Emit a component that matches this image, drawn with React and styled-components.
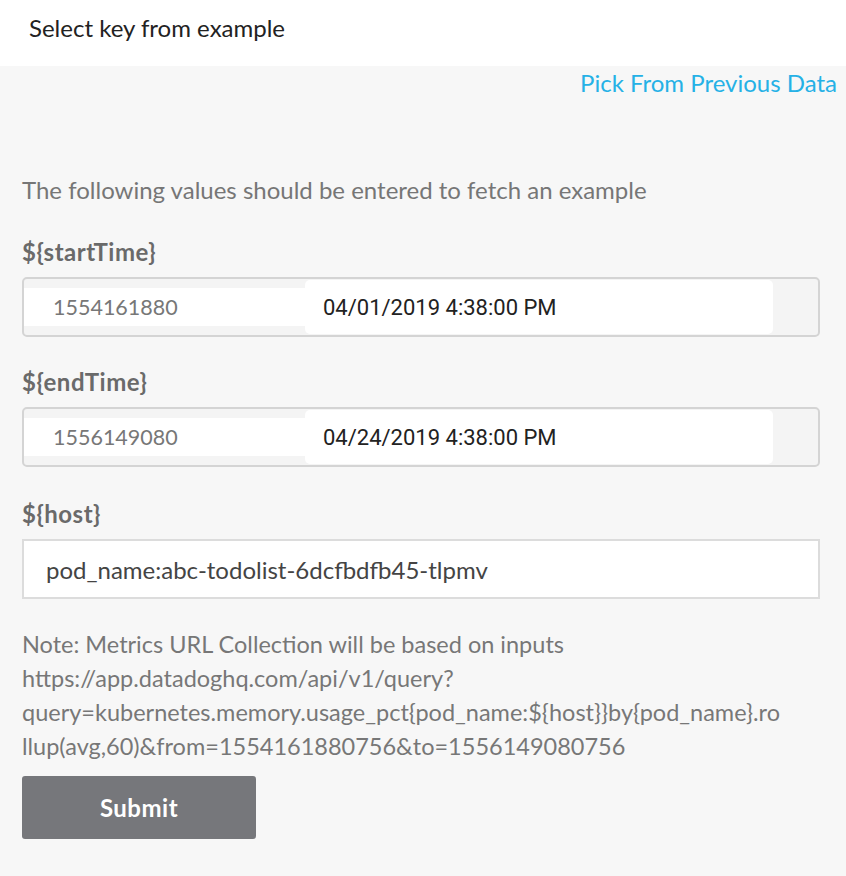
import React from "react";
import styled, { createGlobalStyle } from "styled-components";

const GlobalStyle = createGlobalStyle`
  html, body {
    margin: 0;
    padding: 0;
    background: #f7f7f7;
  }
  body {
    font-family: Lato, "Noto Sans", sans-serif;
  }
  * { box-sizing: border-box; }
`;

const Page = styled.div`
  width: 846px;
  min-height: 876px;
  background: #f7f7f7;
`;

const Header = styled.div`
  height: 66px;
  background: #ffffff;
  display: flex;
  align-items: center;
  padding-left: 29px;
  padding-bottom: 12px;
  font-size: 24px;
  color: #222222;
`;

const Body = styled.div`
  padding: 0 26px 40px 22px;
`;

const LinkRow = styled.div`
  height: 32px;
  display: flex;
  align-items: center;
  justify-content: flex-end;
  margin-right: -17px;
`;

const Link = styled.a`
  font-size: 24px;
  color: #25b1e6;
  text-decoration: none;
  cursor: pointer;
`;

const Intro = styled.p`
  margin: 77px 0 0;
  line-height: 30px;
  font-size: 24px;
  color: #767676;
`;

const Field = styled.div`
  margin-top: ${(p) => p.$top || 30}px;
`;

const Label = styled.div`
  line-height: 30px;
  font-size: 24px;
  font-weight: 700;
  letter-spacing: 0.5px;
  color: #6a6a6a;
  margin-bottom: 10px;
`;

const TimeBox = styled.div`
  height: 60px;
  border: 2px solid #d4d4d4;
  border-radius: 5px;
  background: #f4f4f4;
  display: flex;
  align-items: center;
`;

const Epoch = styled.div`
  width: 281px;
  height: 38px;
  background: #ffffff;
  display: flex;
  align-items: center;
  padding-left: 29px;
  font-size: 21.5px;
  color: #777777;
`;

const DateCell = styled.div`
  width: 468px;
  height: 54px;
  background: #ffffff;
  border-radius: 5px;
  display: flex;
  align-items: center;
  padding-left: 18px;
  font-family: Roboto, "Noto Sans", sans-serif;
  font-size: 22px;
  color: #222222;
`;

const TextInput = styled.div`
  height: 60px;
  border: 2px solid #dcdcdc;
  background: #ffffff;
  display: flex;
  align-items: center;
  padding-left: 22px;
  font-size: 24px;
  color: #444444;
`;

const Note = styled.div`
  margin-top: 28px;
  width: 798px;
  line-height: 34px;
  font-size: 23.5px;
  color: #777777;
  word-break: break-all;
`;

const Button = styled.button`
  margin-top: 13px;
  width: 234px;
  height: 63px;
  border: none;
  border-radius: 3px;
  background: #76777b;
  color: #ffffff;
  font-family: Lato, "Noto Sans", sans-serif;
  font-size: 24px;
  font-weight: 700;
  letter-spacing: 0.5px;
  cursor: pointer;
`;

const timeFields = [
  { name: "${startTime}", epoch: "1554161880", date: "04/01/2019 4:38:00 PM", top: 32 },
  { name: "${endTime}", epoch: "1556149080", date: "04/24/2019 4:38:00 PM", top: 30 },
];

export default function App() {
  return (
    <Page>
      <GlobalStyle />
      <Header>Select key from example</Header>
      <Body>
        <LinkRow>
          <Link>Pick From Previous Data</Link>
        </LinkRow>
        <Intro>The following values should be entered to fetch an example</Intro>
        {timeFields.map((f) => (
          <Field key={f.name} $top={f.top}>
            <Label>{f.name}</Label>
            <TimeBox>
              <Epoch>{f.epoch}</Epoch>
              <DateCell>{f.date}</DateCell>
            </TimeBox>
          </Field>
        ))}
        <Field $top={32}>
          <Label>{"${host}"}</Label>
          <TextInput>pod_name:abc-todolist-6dcfbdfb45-tlpmv</TextInput>
        </Field>
        <Note>
          Note: Metrics URL Collection will be based on inputs
          <br />
          https://app.datadoghq.com/api/v1/query?
          <br />
          {"query=kubernetes.memory.usage_pct{pod_name:${host}}by{pod_name}.ro"}
          <br />
          {"llup(avg,60)&from=1554161880756&to=1556149080756"}
        </Note>
        <Button>Submit</Button>
      </Body>
    </Page>
  );
}
